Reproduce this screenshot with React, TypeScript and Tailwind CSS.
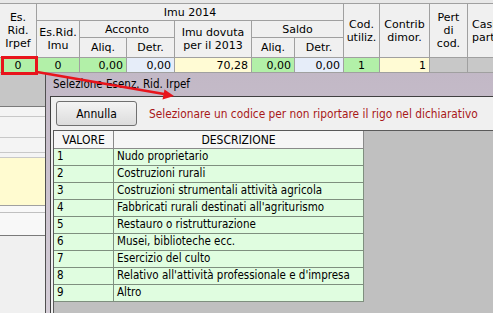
import React from "react";

const hd = "border-r border-b border-[#a0a0a0] bg-[#f0f0f0] flex items-center justify-center text-center leading-[13px] whitespace-nowrap overflow-hidden";
const dc = "border-r border-b border-[#a0a0a0] flex items-center px-[3px] leading-none";

const rows = [
  ["1", "Nudo proprietario"],
  ["2", "Costruzioni rurali"],
  ["3", "Costruzioni strumentali attività agricola"],
  ["4", "Fabbricati rurali destinati all'agriturismo"],
  ["5", "Restauro o ristrutturazione"],
  ["6", "Musei, biblioteche ecc."],
  ["7", "Esercizio del culto"],
  ["8", "Relativo all'attività professionale e d'impresa"],
  ["9", "Altro"],
];

function TopGrid() {
  return (
    <div className="grid grid-cols-[37px_43px_47px_48px_77px_43px_49px_36px_50px_38px_70px] grid-rows-[17px_17px_20px_15px] border-t border-[#a0a0a0] font-['DejaVu_Sans',sans-serif] text-[11px] text-black">
      <div className={`${hd} row-span-3`}>Es.<br />Rid.<br />Irpef</div>
      <div className={`${hd} col-span-6`}>Imu 2014</div>
      <div className={`${hd} row-span-3`}>Cod.<br />utiliz.</div>
      <div className={`${hd} row-span-3`}>Contrib<br />dimor.</div>
      <div className={`${hd} row-span-3`}>Pert<br />di<br />cod.</div>
      <div className={`${hd} row-span-3 !justify-start pl-[4px] text-left`}>Casi<br />partic.</div>
      <div className={`${hd} row-span-2`}>Es.Rid.<br />Imu</div>
      <div className={`${hd} col-span-2`}>Acconto</div>
      <div className={`${hd} row-span-2`}>Imu dovuta<br />per il 2013</div>
      <div className={`${hd} col-span-2`}>Saldo</div>
      <div className={hd}>Aliq.</div>
      <div className={hd}>Detr.</div>
      <div className={hd}>Aliq.</div>
      <div className={hd}>Detr.</div>

      <div className={`${dc} justify-center bg-[#b2f0a8]`}>0</div>
      <div className={`${dc} justify-center bg-[#b2f0a8]`}>0</div>
      <div className={`${dc} justify-end bg-[#b2f0a8]`}>0,00</div>
      <div className={`${dc} justify-end bg-[#e6edf9]`}>0,00</div>
      <div className={`${dc} justify-end bg-[#fffbd4]`}>70,28</div>
      <div className={`${dc} justify-end bg-[#b2f0a8]`}>0,00</div>
      <div className={`${dc} justify-end bg-[#e6edf9]`}>0,00</div>
      <div className={`${dc} justify-center bg-[#b2f0a8]`}>1</div>
      <div className={`${dc} justify-end bg-[#fffbd4]`}>1</div>
      <div className={`${dc} bg-[#c8c8c8]`}></div>
      <div className={`${dc} bg-[#c8c8c8]`}></div>
    </div>
  );
}

function BackRows() {
  return (
    <div className="flex flex-col w-[45px]">
      <div className="h-[34px] bg-[#c6c6c6] border-b border-[#7a7a7a]" />
      <div className="h-[10px] bg-[#f4f4f4] border-b border-[#c8c8c8]" />
      <div className="h-[21px] bg-[#f4f4f4] border-b border-[#c8c8c8]" />
      <div className="h-[15px] bg-[#f4f4f4] border-b border-[#c8c8c8]" />
      <div className="h-[5px] bg-[#f4f4f4] border-b border-[#c8c8c8]" />
      <div className="h-[48px] bg-[#fffbd0] border-b border-[#a0a0a0]" />
      <div className="h-[7px] bg-[#f8f8f8] border-b border-[#c0c0c0]" />
      <div className="h-[23px] bg-[#f8f8f8] border-b border-[#7a7a7a]" />
      <div className="flex-1 bg-[#f0f0f0]" />
    </div>
  );
}

function Dialog() {
  return (
    <div className="absolute left-[45px] top-[73px] w-[470px] h-[260px] border-l border-[#505050] bg-gradient-to-b from-[#c2b8c6] to-[#d6cfd8] flex flex-col">
      <div className="h-[23px] flex items-center pl-[7px] font-['DejaVu_Sans_Condensed','Liberation_Sans',sans-serif] text-[11.5px] text-black">
        Selezione Esenz. Rid. Irpef
      </div>
      <div className="flex-1 ml-[4px] border-l border-t border-[#404040] bg-[#f0f0f0] flex flex-col">
        <div className="flex items-center pl-[5px] pt-[4px] gap-[12px]">
          <button className="w-[81px] h-[25px] rounded-[3px] border border-[#707070] bg-gradient-to-b from-[#f4f4f4] to-[#dcdcdc] font-['DejaVu_Sans_Condensed','Liberation_Sans',sans-serif] text-[12px] text-black">
            Annulla
          </button>
          <span className="pt-[3px] font-['DejaVu_Sans_Condensed','Liberation_Sans',sans-serif] text-[11.8px] text-[#a81818]">
            Selezionare un codice per non riportare il rigo nel dichiarativo
          </span>
        </div>
        <div className="mt-[4px] ml-[2px] flex-1 bg-[#c0c0c0] border-l border-t border-[#5a5a5a]">
          <div className="grid grid-cols-[60px_250px] font-['DejaVu_Sans_Condensed','Liberation_Sans',sans-serif] text-[11.5px] text-black">
            <div className="h-[18px] bg-[#f6f6f6] border-r border-b border-[#8a8a8a] flex items-center justify-center text-[12px]">VALORE</div>
            <div className="h-[18px] bg-[#f6f6f6] border-r border-b border-[#8a8a8a] flex items-center justify-center text-[12px]">DESCRIZIONE</div>
            {rows.map(([v, d]) => (
              <React.Fragment key={v}>
                <div className="h-[17px] bg-[#e0fde0] border-r border-b border-[#7f8f7f] flex items-center pl-[3px]">{v}</div>
                <div className="h-[17px] bg-[#e0fde0] border-r border-b border-[#7f8f7f] flex items-center pl-[3px]">{d}</div>
              </React.Fragment>
            ))}
          </div>
        </div>
      </div>
    </div>
  );
}

export default function App() {
  return (
    <div className="relative w-[493px] h-[313px] overflow-hidden bg-[#f0f0f0]">
      <div className="h-[3px] bg-[#e8e8e8]" />
      <TopGrid />
      <BackRows />
      <Dialog />
      {/* evidenziazione rossa */}
      <div className="absolute left-[1px] top-[56px] w-[37px] h-[19px] border-[3px] border-[#e8141c]" />
      <svg className="absolute left-0 top-0" width="493" height="313" viewBox="0 0 493 313">
        <line x1="37" y1="72" x2="164" y2="94" stroke="#e8141c" strokeWidth="2.5" />
        <polygon points="174,96 162.5,99.5 164.5,89.5" fill="#e8141c" />
      </svg>
    </div>
  );
}
